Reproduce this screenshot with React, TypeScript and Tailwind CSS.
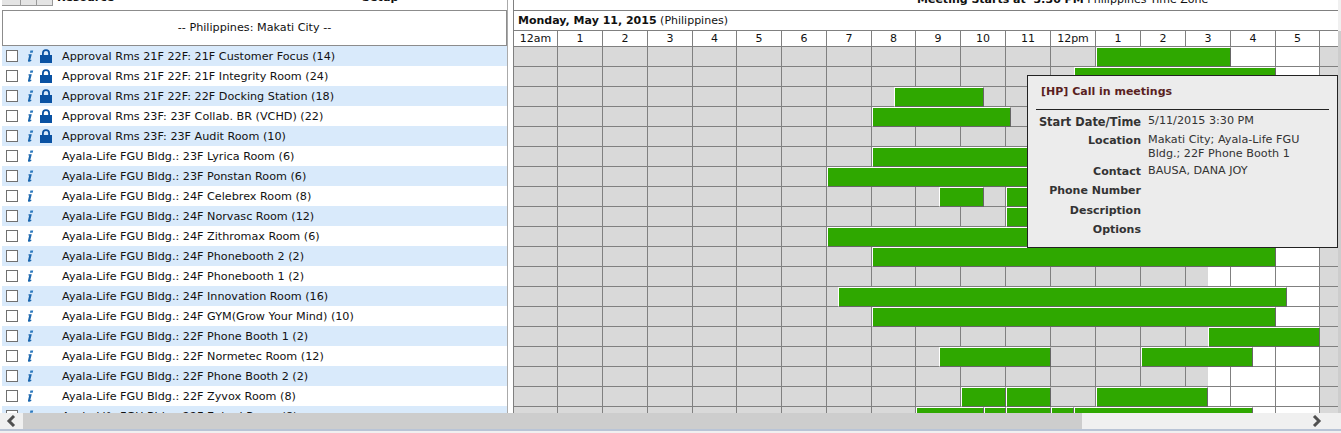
import React from "react";

const HOURS = ["12am","1","2","3","4","5","6","7","8","9","10","11","12pm","1","2","3","4","5"];
const LINES = [513,557,602,647,692,736,781,826,871,915,960,1005,1050,1095,1140,1185,1230,1275,1319,1338];

type Row = { name: string; lock?: boolean; bars: [number, number][]; white?: number };
const A = "Ayala-Life FGU Bldg.: ";
const ROWS: Row[] = [
  { name: "Approval Rms 21F 22F: 21F Customer Focus (14)", lock: true, bars: [[1096,1230]], white: 1230 },
  { name: "Approval Rms 21F 22F: 21F Integrity Room (24)", lock: true, bars: [[1074,1275]], white: 1275 },
  { name: "Approval Rms 21F 22F: 22F Docking Station (18)", lock: true, bars: [[894,983]] },
  { name: "Approval Rms 23F: 23F Collab. BR (VCHD) (22)", lock: true, bars: [[872,1010]] },
  { name: "Approval Rms 23F: 23F Audit Room (10)", lock: true, bars: [] },
  { name: A + "23F Lyrica Room (6)", bars: [[872,1100]] },
  { name: A + "23F Ponstan Room (6)", bars: [[827,1100]] },
  { name: A + "24F Celebrex Room (8)", bars: [[939,983],[1006,1100]] },
  { name: A + "24F Norvasc Room (12)", bars: [[1006,1100]] },
  { name: A + "24F Zithromax Room (6)", bars: [[827,1100]] },
  { name: A + "24F Phonebooth 2 (2)", bars: [[872,1275]], white: 1275 },
  { name: A + "24F Phonebooth 1 (2)", bars: [], white: 1208 },
  { name: A + "24F Innovation Room (16)", bars: [[838,1286]], white: 1286 },
  { name: A + "24F GYM(Grow Your Mind) (10)", bars: [[872,1275]], white: 1275 },
  { name: A + "22F Phone Booth 1 (2)", bars: [[1208,1319]] },
  { name: A + "22F Normetec Room (12)", bars: [[939,1050],[1141,1252]], white: 1252 },
  { name: A + "22F Phone Booth 2 (2)", bars: [], white: 1208 },
  { name: A + "22F Zyvox Room (8)", bars: [[961,1005],[1006,1050],[1096,1207]], white: 1207 },
  { name: A + "22F Enbrel Room (8)", bars: [[916,983],[984,1005],[1006,1050],[1051,1073],[1074,1252]], white: 1252 },
];

function InfoIcon() {
  return (
    <svg width="7" height="12" viewBox="0 0 7 12" className="shrink-0">
      <path d="M3.4 0.4h2.8l-.5 2.3H2.9z" fill="#2a78bd" />
      <path d="M1.6 4.2h3.2L3.4 9.6c-.1.4.3.4.9.1l.2.8c-.8.8-1.6 1.2-2.4 1.2-.9 0-1.3-.5-1.1-1.3L2.2 5.3l-.9.1z" fill="#1a66ad" />
    </svg>
  );
}

function LockIcon() {
  return (
    <svg width="12" height="14" viewBox="0 0 12 14" className="shrink-0">
      <path d="M2.9 6.5V4.2a3.1 3.1 0 0 1 6.2 0v2.3" fill="none" stroke="#0a52a3" strokeWidth="1.8" />
      <rect x="0" y="6" width="12" height="8" fill="#0a52a3" />
    </svg>
  );
}

function GridRow({ row }: { row: Row }) {
  return (
    <div className="relative flex h-5 border-b border-[#808080]">
      {LINES.slice(0, -1).map((x, k) => {
        const end = LINES[k + 1];
        const isTail = k === LINES.length - 2;
        const white = row.white !== undefined && !isTail ? row.white : 9999;
        const whiteStart = Math.max(0, white - x);
        const w = end - x;
        return (
          <div
            key={k}
            className="relative box-border shrink-0 border-l border-[#808080] bg-[#d9d9d9]"
            style={{ width: w }}
          >
            {whiteStart < w && (
              <div className="absolute inset-y-0 right-0 bg-white" style={{ left: Math.max(0, whiteStart - 1) }} />
            )}
          </div>
        );
      })}
      {row.bars.map(([a, b], k) => (
        <div
          key={k}
          className="absolute top-0 bottom-[-1px] box-border border-t border-l border-t-white border-l-white border-r border-b border-r-[#666666] border-b-[#666666] bg-[#2fa800]"
          style={{ left: a - 513, width: b - a + 1 }}
        />
      ))}
    </div>
  );
}

export default function App() {
  return (
    <div className="relative h-[433px] w-[1341px] overflow-hidden bg-white font-['DejaVu_Sans',sans-serif] text-[11px] text-[#111111]">
      <div className="flex h-[413px] overflow-hidden">
        {/* left panel */}
        <div className="w-[507px] shrink-0">
          <div className="flex h-[10px] items-end overflow-hidden leading-none">
            <div className="ml-[2px] flex h-[6px] self-start">
              <div className="h-[6px] w-[19px] border-r border-b border-[#999999] bg-[#e4e4e4]" />
              <div className="h-[6px] w-[16px] border-r border-b border-[#999999] bg-[#e4e4e4]" />
              <div className="h-[6px] w-[16px] border-r border-b border-[#999999] bg-[#e4e4e4]" />
            </div>
            <div className="relative ml-[4px] h-[10px] w-[305px] font-bold"><span className="-mt-[8px] block">Resource</span></div>
            <div className="h-[10px] font-bold"><span className="-mt-[8px] block">Setup</span></div>
          </div>
          <div className="ml-[2px] flex h-[36px] w-[505px] items-center justify-center border border-[#8c8c8c] pt-[1px] text-[11.2px]">
            -- Philippines: Makati City --
          </div>
          {ROWS.map((r, i) => (
            <div key={i} className={`ml-[2px] flex h-5 w-[505px] items-center ${i % 2 === 0 ? "bg-[#d9eafb]" : "bg-white"}`}>
              <div className="ml-[4px] h-[12px] w-[12px] shrink-0 border border-[#707070] bg-white" />
              <div className="ml-[9px] w-[7px] shrink-0"><InfoIcon /></div>
              <div className="ml-[6px] w-[12px] shrink-0">{r.lock && <LockIcon />}</div>
              <div className="ml-[10px] whitespace-nowrap pt-[2px] text-[11.2px]">{r.name}</div>
            </div>
          ))}
        </div>

        <div className="w-[6px] shrink-0 border-l border-[#aaaaaa]" />

        {/* right panel */}
        <div className="w-[825px] shrink-0">
          <div className="relative h-[11px] overflow-hidden border-b border-l border-[#808080]">
            <div className="-mt-[8px] ml-[403px] whitespace-nowrap">
              <b>Meeting Starts at&nbsp; 3:30 PM</b> Philippines Time Zone
            </div>
          </div>
          <div className="flex h-[19px] items-center border-l border-[#808080] pl-[4px] pt-[2px]">
            <b>Monday, May 11, 2015</b>&nbsp;(Philippines)
          </div>
          <div className="box-content flex h-[15px] border-t border-b border-[#808080]">
            {LINES.slice(0, -1).map((x, k) => (
              <div
                key={k}
                className="box-border flex shrink-0 items-center justify-center border-l border-[#808080] pt-[1px]"
                style={{ width: LINES[k + 1] - x }}
              >
                {HOURS[k] ?? ""}
              </div>
            ))}
          </div>
          {ROWS.map((r, i) => (
            <GridRow key={i} row={r} />
          ))}
        </div>
        <div className="flex w-[3px] shrink-0 flex-col">
          <div className="h-[31px] bg-[#f0f0f0]" />
          <div className="flex-1 bg-[#cdcdcd]" />
        </div>
      </div>

      {/* horizontal scrollbar */}
      <div className="flex h-[16px] items-center bg-[#f0f0f0]">
        <div className="flex h-full w-[23px] items-center justify-center pr-[2px]">
          <svg width="10" height="12" viewBox="0 0 10 12"><path d="M8 1 3 6l5 5" fill="none" stroke="#505050" strokeWidth="3" /></svg>
        </div>
        <div className="h-full w-[1059px] bg-[#cdcdcd]" />
        <div className="flex-1" />
        <div className="mr-[19px] flex h-full w-[10px] items-center justify-center">
          <svg width="10" height="12" viewBox="0 0 10 12"><path d="M2 1l5 5-5 5" fill="none" stroke="#505050" strokeWidth="3" /></svg>
        </div>
      </div>
      <div className="h-[2px] bg-[#b9c4d6]" />
      <div className="h-[2px] bg-[#f0f0f0]" />

      {/* tooltip */}
      <div className="absolute left-[1027px] top-[75px] h-[173px] w-[311px] border border-[#222222] bg-[#ececec] text-[#333333]">
        <div className="ml-[13px] mt-[8px] h-[16px] font-bold text-[#5a1f1f]">[HP] Call in meetings</div>
        <div className="mx-[8px] mt-[9px] border-t border-[#222222]" />
        <div className="mt-[5px] grid grid-cols-[113px_1fr] gap-x-[7px] leading-[14px] [&>div:nth-child(even)]:-mt-[1px] [&>div:nth-child(even)]:text-[11.2px]">
          <div className="h-[19px] text-right text-[11.4px] font-bold">Start Date/Time</div><div>5/11/2015 3:30 PM</div>
          <div className="text-right font-bold">Location</div><div className="w-[170px] pb-[4px]">Makati City; Ayala-Life FGU Bldg.; 22F Phone Booth 1</div>
          <div className="h-[19px] text-right font-bold">Contact</div><div>BAUSA, DANA JOY</div>
          <div className="h-[20px] text-right font-bold">Phone Number</div><div />
          <div className="h-[19px] text-right font-bold">Description</div><div />
          <div className="h-[19px] text-right font-bold">Options</div><div />
        </div>
      </div>
    </div>
  );
}
